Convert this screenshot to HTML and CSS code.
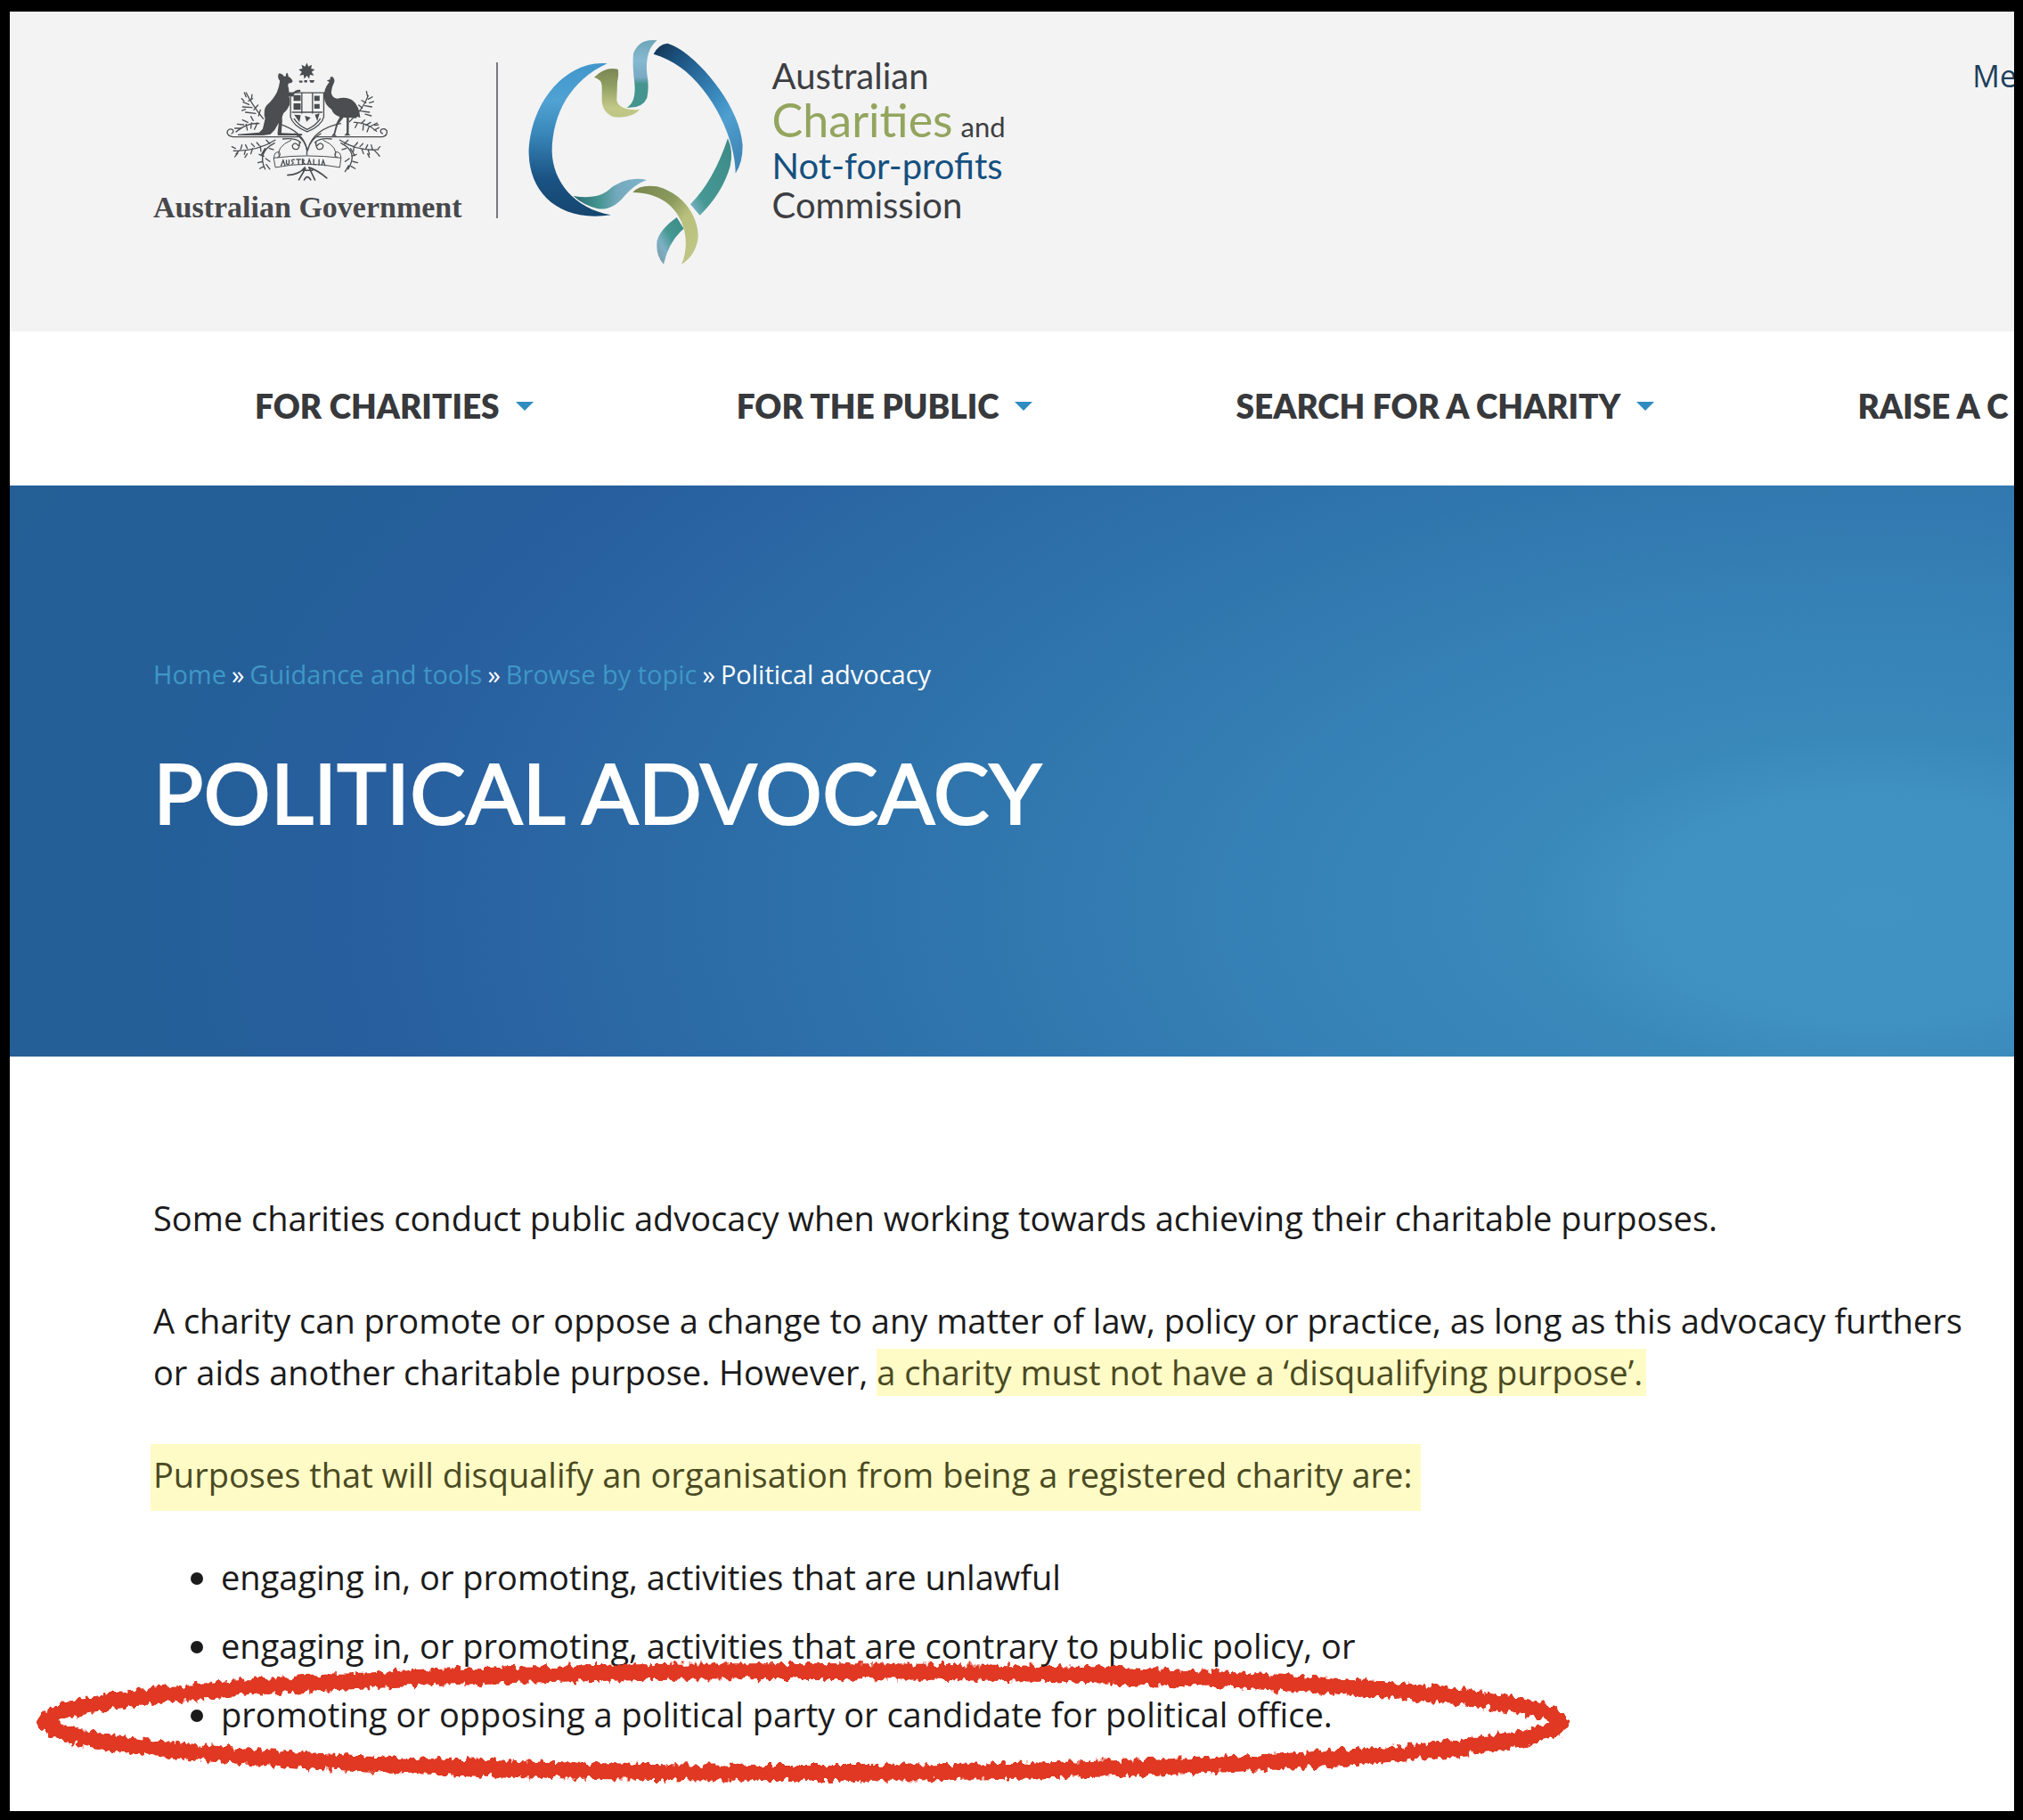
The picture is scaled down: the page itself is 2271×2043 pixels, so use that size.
FILE: index.html
```html
<!DOCTYPE html>
<html lang="en">
<head>
<meta charset="utf-8">
<meta name="viewport" content="width=device-width, initial-scale=1">
<title>Political advocacy | ACNC</title>
<link rel="stylesheet" href="styles.css">
</head>
<body>
<header class="masthead">
  <div class="gov">
    <svg class="crest" viewBox="270 51 580 420" role="img" aria-label="Commonwealth coat of arms" fill="none" stroke="#4b4d50" stroke-width="3" stroke-linecap="round">
      <g fill="#4b4d50" stroke="none">
        <path d="M557 61l5 13 12-6-3 13 13 3-11 8 8 12-14-2-2 13-8-10-9 10-2-13-14 2 8-12-11-8 13-3-3-13 12 6z"/>
        <path d="M468 97q8 2 12 10l6-1q-1-8 4-12 5 6 4 13 14 8 15 17-5 8-14 6l-2 8q4 10 4 22l12 4q10-14 25-12l2 6-20 5-5 12-14-1q4 12 2 28-8 20-20 28-8 14-5 24l-3 44 70 3v5h-82l-1-8 4-34-14 24-14 14-24 4h-86v-4l72-6 12-12 8-34q-8-30 6-46 22-20 34-44 8-20 10-38-10-12-4-25z"/>
        <path d="M624 121l12-4q-2-8 4-9 10 2 10 16-10 20-11 38 4 18 20 20 36-8 54 8 20 16 24 56l-10-3-4 5-24-2-1 54 6 6-21 1 8-10 0-50-10-2-20 26-9 32 6 5h-18l8-10 8-32 12-22q-22-8-28-26-24-16-25-42-2-26 18-50z"/>
        <path d="M512 170h24v20h-24zM512 198h24v22h-24zM582 172h18v18h-18zM582 200h18v16h-18zM514 236l22 2-4 24zM550 240l20 6-14 14zM584 236l16-4-8 26z"/>
        <path d="M530 121l12 0 0 7-10 0zM548 120l10 0 0 7-10 0zM565 120l18 0-4 8-10 0z"/>
      </g>
      <path d="M502 162h112v82q-8 30-56 50-48-20-56-50zM508 228h100M540 165v66M576 165v66M514 250q14 22 44 36 30-14 44-36" stroke-width="4"/>
      <path d="M308 311h220M590 311h222q18-4 15-20-8-12-20-4-4 9 5 13M308 311q-20-3-20-16 4-14 18-9 7 8-3 14" stroke-width="4"/>
      <path d="M557 372v-22q-14-56-90-82M561 350q20-66 110-84M516 300q36 20 42 60M604 300q-36 20-44 56M528 340q-12-14-20 0 0 16 18 12 8-8 6-22M592 340q12-14 20 0 0 16-18 12-8-8-6-22M536 330q-16-16-60-12M584 330q16-16 56-12" stroke-width="4"/>
      <path d="M446 382q110-14 226 0l-4 32q-110-22-216 0zM446 382q0-22 18-20 8 14-6 18M672 382q0-22-18-20-8 14 6 18M464 380q-14-34 40-58M652 380q14-34-40-58" stroke-width="3"/>
      <path d="M470 408l7-18 6 17M488 390v12q8 5 9-2v-11M514 388q-10-2-7 6 8 4 0 9M522 387h14M529 387v17M542 404v-18q10 2 1 10l8 8M560 404l5-17 6 17M580 387v17h8M598 388v18M607 406l5-16 6 18" stroke-width="4"/>
      <path d="M492 440q40-2 58-26M624 450q-30-26-60-36M530 456l22-38M584 456l-18-38M548 456q10-20 22 0M540 424h36" stroke-width="5"/>
      <g stroke-width="4">
        <path d="M410 250q-40-50-58-88M396 266q-40-4-78 28M352 176l-6-14M360 190l14-8M362 202l-20-8M372 212l-32-2M378 220l14-16M384 232l-34-4M394 240l6-20M370 184l2-16M345 190l-8-8M350 218l-12 4M376 256l-8-14M358 262l-18-8M344 270l-22-2M336 282l-22 0M352 268l4 20M370 264l-2 18M390 264l-10 22"/>
        <path d="M700 260q46-40 64-88M716 262q40-2 76 30M762 176l-4-18M764 184l14-8M756 196l-14-8M752 206l24 4M744 214l-12-10M738 224l30 4M754 234l20 6M768 196l14-4M740 266l12-12M756 272l16-10M770 276l24-12M784 288l16-8M748 270l-2 18M766 278l-6 16M728 264l-8 16M786 272l12-2"/>
        <path d="M450 322q-60 38-140 36M448 332q-60 30-32 88M316 350l-12-6M330 356l-12 12M334 352l4-14M350 356l-4 14M356 350l-6-12M374 350l-6 18M380 344l-10-10M396 340l-8-10M400 342l2 18M416 350l-14 24M412 376l-16-6M408 394l-16 4M412 410l-14 8M418 384l14 10M420 404l12 16M430 350l14 4M432 334l-12-12M324 366l-10 12M356 368l-8 12"/>
        <path d="M668 322q60 38 130 32M672 332q60 30 24 88M798 350l6-6M784 356l12 12M778 352l-4-14M764 356l4 14M756 350l6-12M742 350l6 18M736 344l10-10M720 340l8-10M716 342l-2 18M704 350l14 24M708 376l16-6M712 394l16 4M706 410l14 8M700 384l-14 10M698 408l-12 20M690 350l-14 4M684 334l12-12M794 366l8 10M762 368l6 12"/>
      </g>
    </svg>
    <span class="gov-name">Australian Government</span>
  </div>
  <div class="divider"></div>
  <svg class="ribbon" viewBox="0 0 870 840" role="img" aria-label="ACNC logo">
    <defs>
      <linearGradient id="west" x1="0" y1="0" x2="0" y2="1"><stop offset="0" stop-color="#4196cb"/><stop offset=".25" stop-color="#50a2d3"/><stop offset=".45" stop-color="#3a88bb"/><stop offset=".75" stop-color="#1a5384"/><stop offset="1" stop-color="#15466f"/></linearGradient>
      <linearGradient id="east" x1="0" y1="0" x2=".8" y2="1"><stop offset="0" stop-color="#12324f"/><stop offset=".2" stop-color="#1b527f"/><stop offset=".6" stop-color="#3c8bc0"/><stop offset=".75" stop-color="#509fd0"/><stop offset="1" stop-color="#3f88b8"/></linearGradient>
      <linearGradient id="gulf" x1="0" y1="0" x2="0" y2="1"><stop offset="0" stop-color="#7a8653"/><stop offset=".35" stop-color="#8f9f62"/><stop offset=".8" stop-color="#c2c887"/><stop offset="1" stop-color="#bec684"/></linearGradient>
      <linearGradient id="cape" x1="0" y1="0" x2="0" y2="1"><stop offset="0" stop-color="#6ea5b8"/><stop offset=".3" stop-color="#86b9d1"/><stop offset=".55" stop-color="#78abc3"/><stop offset=".65" stop-color="#45948f"/><stop offset="1" stop-color="#43958f"/></linearGradient>
      <linearGradient id="bight" x1="0" y1="0" x2="1" y2="0"><stop offset="0" stop-color="#2c6a74"/><stop offset=".35" stop-color="#449590"/><stop offset=".6" stop-color="#74a9bd"/><stop offset="1" stop-color="#7fb3cb"/></linearGradient>
      <linearGradient id="coast" x1="1" y1="0" x2="0" y2="1"><stop offset="0" stop-color="#3c8a87"/><stop offset=".75" stop-color="#469894"/><stop offset="1" stop-color="#8ab9cf"/></linearGradient>
      <linearGradient id="south" x1="0" y1="0" x2="1" y2="1"><stop offset="0" stop-color="#77854c"/><stop offset=".4" stop-color="#8c9c5e"/><stop offset=".6" stop-color="#b9c07c"/><stop offset="1" stop-color="#c1c787"/></linearGradient>
      <linearGradient id="tip" x1="1" y1="0" x2="0" y2="1"><stop offset="0" stop-color="#3b8a86"/><stop offset=".45" stop-color="#469893"/><stop offset=".7" stop-color="#7fb0c4"/><stop offset="1" stop-color="#7898a6"/></linearGradient>
    </defs>
    <path fill="url(#west)" d="M332 124C200 110 70 250 68 430C72 560 170 660 345 634C220 612 148 520 146 420C148 290 210 180 332 124Z"/>
    <path fill="url(#gulf)" d="M288 170Q325 133 368 143Q372 160 366 185L364 250Q376 284 442 279Q410 312 350 303Q312 285 314 240V200Q314 178 288 170Z"/>
    <path fill="url(#cape)" d="M500 46Q440 38 420 90Q416 130 424 190Q430 255 398 272Q450 276 466 240Q474 200 466 160Q458 80 500 46Z"/>
    <path fill="url(#east)" d="M488 92Q506 58 535 56C620 80 780 260 788 400Q788 460 764 494C766 370 660 140 488 92Z"/>
    <path fill="url(#bight)" d="M218 570Q290 582 330 555Q390 500 465 516Q425 530 390 570Q350 620 300 613Q250 600 218 570Z"/>
    <path fill="url(#coast)" d="M738 376Q758 420 746 470Q720 560 644 635L612 598Q690 520 738 376Z"/>
    <path fill="url(#tip)" d="M566 642L590 680Q540 720 522 800Q494 770 500 720Q512 680 566 642Z"/>
    <path fill="url(#south)" d="M418 558Q440 530 500 538C600 566 640 650 638 710Q630 770 582 800C620 720 590 560 418 558Z"/>
  </svg>
  <div class="brand">
    <span class="brand-top">Australian</span>
    <span class="brand-charities">Charities<small class="brand-and">and</small></span>
    <span class="brand-nfp">Not-for-profits</span>
    <span class="brand-end">Commission</span>
  </div>
  <a class="me" href="#">Me</a>
</header>
<nav class="nav" aria-label="Main">
  <a class="nav-item" href="#">FOR CHARITIES<span class="caret"></span></a>
  <a class="nav-item" href="#">FOR THE PUBLIC<span class="caret"></span></a>
  <a class="nav-item" href="#">SEARCH FOR A CHARITY<span class="caret"></span></a>
  <a class="nav-item" href="#">RAISE A C</a>
</nav>
<section class="hero">
  <nav class="crumbs" aria-label="Breadcrumb">
    <a href="#">Home</a><span>»</span>
    <a href="#">Guidance and tools</a><span>»</span>
    <a href="#">Browse by topic</a><span>»</span>
    <span>Political advocacy</span>
  </nav>
  <h1 class="title">POLITICAL ADVOCACY</h1>
</section>
<main class="content">
  <p>Some charities conduct public advocacy when working towards achieving their charitable purposes.</p>
  <p>A charity can promote or oppose a change to any matter of law, policy or practice, as long as this advocacy furthers or aids another charitable purpose. However, <mark class="mark">a charity must not have a ‘disqualifying purpose’.</mark></p>
  <p><mark class="mark mark-tall">Purposes that will disqualify an organisation from being a registered charity are:</mark></p>
  <ul class="list">
    <li>engaging in, or promoting, activities that are unlawful</li>
    <li>engaging in, or promoting, activities that are contrary to public policy, or</li>
    <li class="circled">promoting or opposing a political party or candidate for political office.
      <svg class="crayon" viewBox="0 0 1744 150" aria-hidden="true">
        <defs>
          <filter id="rough" x="-2%" y="-10%" width="104%" height="120%">
            <feTurbulence type="fractalNoise" baseFrequency=".16 .1" numOctaves="2" seed="4" result="n"/>
            <feDisplacementMap in="SourceGraphic" in2="n" scale="13" xChannelSelector="R" yChannelSelector="G"/>
          </filter>
        </defs>
        <ellipse cx="872" cy="75" rx="850" ry="57" fill="none" stroke="#e03823" stroke-width="18" filter="url(#rough)"/>
      </svg>
    </li>
  </ul>
</main>
</body>
</html>
```
FILE: styles.css
```css
* { box-sizing: border-box; }

body {
  margin: 0;
  min-height: 100vh;
  border: solid #000;
  border-width: 13px 10px 10px 11px;
  background: #fff;
  color: #1b1b1b;
  font-family: "Open Sans", "Noto Sans", sans-serif;
  font-size: 38px;
  line-height: 58px;
  overflow-x: hidden;
}

a { color: inherit; text-decoration: none; }

.masthead {
  display: flex;
  align-items: flex-start;
  padding: 17px 0 62px 161px;
  background: #f3f3f3;
  overflow: hidden;
}

.gov {
  display: flex;
  flex-direction: column;
  align-items: center;
  padding-top: 37px;
}
.crest { width: 193px; height: 140px; }
.gov-name {
  color: #46484b;
  font: bold 34px/52px "Liberation Serif", serif;
  white-space: nowrap;
}

.divider {
  width: 2px;
  height: 175px;
  margin: 40px 12px 0 38px;
  background: #77797c;
}
.ribbon { flex: none; width: 290px; height: 280px; }

.brand {
  display: flex;
  flex-direction: column;
  padding: 32px 0 0 6px;
  color: #3d3e42;
  font-family: Lato, sans-serif;
  font-size: 40px;
  white-space: nowrap;
}
.brand-top { line-height: 46px; }
.brand-charities { color: #93a55e; font-size: 52px; line-height: 52px; }
.brand-and { margin-left: 9px; color: #3d3e42; font-size: 31px; line-height: 1; }
.brand-nfp { color: #15507f; line-height: 52px; }
.brand-end { line-height: 36px; }

.me {
  margin-left: auto;
  padding-top: 26px;
  margin-right: -3px;
  color: #1d3f5c;
  font-size: 34px;
}

.nav {
  display: flex;
  gap: 228px;
  padding: 55px 0 60px 275px;
  overflow: hidden;
}
.nav-item {
  display: flex;
  flex: none;
  align-items: center;
  gap: 18px;
  color: #37393c;
  font-family: Lato, sans-serif;
  font-weight: 800;
  font-size: 37px;
  white-space: nowrap;
}
.caret {
  border: 10px solid transparent;
  border-top-color: #2f8bc0;
  border-bottom-width: 0;
}

.hero {
  padding: 183px 161px 241px;
  background: radial-gradient(100% 175% at 93% 74%, #4093c2 0, #3f91c1 12%, #3a89bb 17%, #3682b7 29%, #2f74ac 48%, #2b69a4 63%, #285f9f 75%, #255f99 84%, #245f96 100%);
  color: #fff;
}
.crumbs { display: flex; gap: 6px; font-size: 29px; }
.crumbs a { color: #3f97c6; }
.title {
  margin: 47px 0 0;
  font-family: Lato, sans-serif;
  font-weight: 400;
  font-size: 94px;
  line-height: 112px;
  -webkit-text-stroke: 2px #fff;
}

.content { padding: 152px 40px 0 161px; }
.content p { margin: 0 0 57px; }
.mark { padding: 0 4px 1px 0; background: #fffbc6; color: #4a4a22; }
.mark-tall { padding: 8px 10px 15px 3px; margin-left: -3px; }

.list { margin: 0; padding: 0 0 0 76px; }
.list li { margin-bottom: 19px; }
.circled { position: relative; }
.crayon {
  position: absolute;
  left: -218px;
  top: -37px;
  width: 1744px;
  height: 150px;
}
```
